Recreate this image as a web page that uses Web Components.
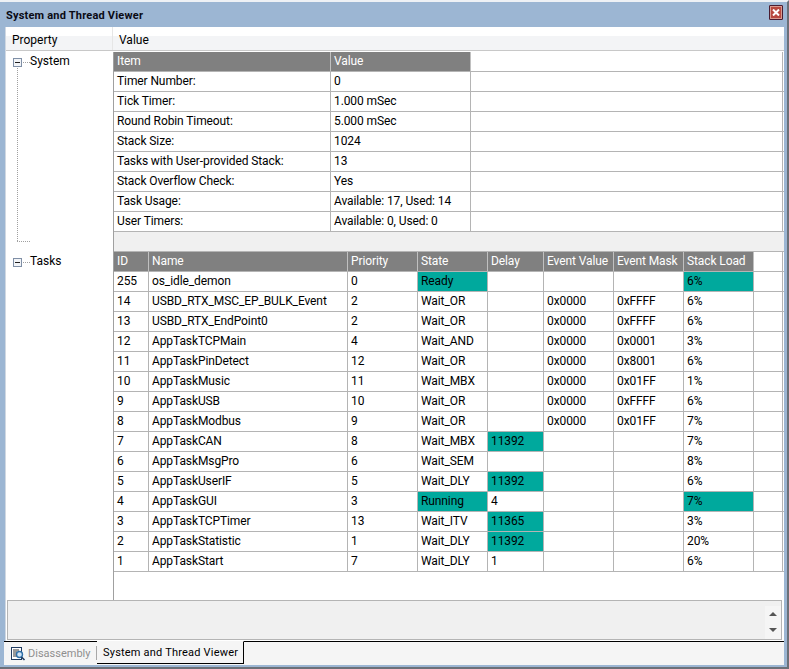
<!DOCTYPE html>
<html>
<head>
<meta charset="utf-8">
<style>
  html, body { margin: 0; padding: 0; height: 100%; overflow: hidden; }
  body { font: 12px Roboto, "Open Sans", sans-serif; color: #000; }
</style>
</head>
<body>
<thread-viewer></thread-viewer>

<script>
// shared look of the grey-lined grids
const GRID_CSS = `
  :host { display: block; letter-spacing: -0.1px; }
  .row { display: flex; height: 20px; box-sizing: border-box; border-bottom: 1px solid #b4b4b4; }
  .cell { box-sizing: border-box; height: 19px; line-height: 19px; padding-left: 3px; border-right: 1px solid #b4b4b4; white-space: nowrap; overflow: hidden; flex: none; }
  .head .cell { background: #808080; color: #fff; border-right-color: #c0c0c0; }
  .head .cell:last-child { background: #fff; border-right-color: #b4b4b4; }
  .hot { background: #00a99d; }
`;

class InfoGrid extends HTMLElement {
  constructor() {
    super();
    this.attachShadow({ mode: "open" });
  }

  // widths: column widths, rows: array of string arrays, first one is the header
  // hot: list of "row:col" cells with the green background
  setData(widths, rows, hot = []) {
    const html = rows.map((r, i) => {
      const cells = r.map((t, c) => {
        const cls = "cell" + (hot.includes(i + ":" + c) ? " hot" : "");
        return `<div class="${cls}" style="width:${widths[c]}px">${t}</div>`;
      }).join("");
      return `<div class="row${i === 0 ? " head" : ""}">${cells}</div>`;
    }).join("");
    this.shadowRoot.innerHTML = `<style>${GRID_CSS}</style>${html}`;
  }
}
customElements.define("info-grid", InfoGrid);

class TreeNode extends HTMLElement {
  constructor() {
    super();
    this.attachShadow({ mode: "open" });
    this.shadowRoot.innerHTML = `
      <style>
        :host { display: flex; align-items: center; height: 20px; position: relative; }
        svg { flex: none; margin-left: 7px; }
        .label { line-height: 18px; height: 20px; }
      </style>
      <svg width="17" height="9" viewBox="0 0 17 9" shape-rendering="crispEdges">
        <rect x="0.5" y="0.5" width="8" height="8" fill="#f2f4f7" stroke="#7f8fa6"/>
        <rect x="2" y="4" width="5" height="1" fill="#202020"/>
        <path d="M10 4.5h1M12 4.5h1M14 4.5h1M16 4.5h1" stroke="#a0a0a0" fill="none"/>
      </svg>
      <span class="label"><slot></slot></span>
    `;
  }
}
customElements.define("tree-node", TreeNode);

class TabBar extends HTMLElement {
  constructor() {
    super();
    this.attachShadow({ mode: "open" });
    this.shadowRoot.innerHTML = `
      <style>
        :host { display: flex; height: 24px; background: #f5f5f5; border-top: 1px solid #000; box-sizing: border-box; margin-left: 4px; font-size: 11px; }
        .off { display: flex; align-items: center; width: 93px; color: #8f8f8f; box-sizing: border-box; padding-left: 6px; position: relative; white-space: nowrap; }
        .off::after { content: ""; position: absolute; right: 0; top: 4px; bottom: 5px; width: 1px; background: #a8a8a8; }
        .off svg { margin-right: 2px; flex: none; }
        .on { margin-top: -1px; height: 23px; border-top: 1px solid #f5f5f5; background: #f5f5f5; border-right: 1px solid #000; border-bottom: 1px solid #000; box-sizing: border-box; width: 147px; padding-left: 6px; line-height: 21px; color: #000; white-space: nowrap; letter-spacing: 0.2px; }
      </style>
      <div class="off">
        <svg width="16" height="16" viewBox="0 0 16 16">
          <rect x="1.5" y="1.5" width="10" height="12" fill="#fff" stroke="#1f3a5f"/>
          <path d="M3 4h6M3 6h4M3 8h4M3 10h5" stroke="#333"/>
          <circle cx="9.5" cy="8.5" r="3" fill="#cfe3f5" stroke="#2f6fa8" stroke-width="1.4"/>
          <path d="M11.5 11l3 3" stroke="#1f3a5f" stroke-width="1.6"/>
        </svg>
        <span>Disassembly</span>
      </div>
      <div class="on">System and Thread Viewer</div>
    `;
  }
}
customElements.define("tab-bar", TabBar);

class ThreadViewer extends HTMLElement {
  constructor() {
    super();
    this.attachShadow({ mode: "open" });
    this.shadowRoot.innerHTML = `
      <style>
        :host { display: flex; flex-direction: column; width: 789px; height: 669px; box-sizing: border-box; background: #9cb6d3; border-top: 2px solid #eef1f5; border-right: 2px solid #6b7078; border-bottom: 2px solid #6b7078; padding: 0 3px 2px 0; }
        .title { height: 25px; box-sizing: border-box; padding: 1px 1px 0 6px; flex: none; display: flex; align-items: center; justify-content: space-between; font-weight: 700; font-size: 11px; letter-spacing: 0.2px; color: #0a0a14; }
        .close { width: 14px; height: 15px; margin-top: -5px; box-sizing: border-box; border: 1px solid #4a1c30; border-radius: 1px; background: #b8483f; box-shadow: inset 0 0 0 1px #d99a90; display: flex; align-items: center; justify-content: center; }
        .body { flex: 1; margin-left: 5px; background: #fff; min-height: 0; display: flex; flex-direction: column; border-left: 1px solid #d0d8e2; }
        .cols { flex: none; height: 24px; margin-bottom: 1px; display: flex; box-sizing: border-box; border-bottom: 1px solid #c8c8c8; background: linear-gradient(#fff 0 9px, #f3f4f6 9px); }
        .cols div { line-height: 26px; padding-left: 6px; box-sizing: border-box; }
        .cols .p { width: 107px; border-right: 1px solid #e6e6e6; }
        .main { flex: 1; display: flex; min-height: 0; }
        .tree { width: 107px; flex: none; position: relative; border-right: 1px solid #a0a0a0; }
        .tree .sys { position: absolute; top: 0; left: 0; right: 0; }
        .tree .tasks { position: absolute; top: 200px; left: 0; right: 0; }
        .guide { position: absolute; left: 11px; top: 14px; height: 175px; border-left: 1px dotted #a0a0a0; }
        .guide2 { position: absolute; left: 11px; top: 189px; width: 13px; border-top: 1px dotted #a0a0a0; }
        .grids { flex: 1; min-width: 0; }
        .gap { height: 20px; box-sizing: border-box; background: #f0f0f0; border-bottom: 1px solid #b4b4b4; }
        .bottom { flex: none; height: 40px; margin: 0 2px 1px 1px; background: #f0f0f0; border: 1px solid #b4b4b4; box-sizing: border-box; position: relative; }
        .arrows { position: absolute; right: 0; top: 5px; bottom: 0; width: 16px; background: #f5f5f5; }
        .arrows i { position: absolute; left: 4px; width: 0; height: 0; border-left: 4px solid transparent; border-right: 4px solid transparent; }
        .arrows .u { top: 6px; border-bottom: 4px solid #555; }
        .arrows .d { bottom: 7px; border-top: 4px solid #555; }
      </style>
      <div class="title"><span>System and Thread Viewer</span>
        <div class="close"><svg width="8" height="7" viewBox="0 0 8 7"><path d="M1 0.5l6 6M7 0.5l-6 6" stroke="#fff" stroke-width="2"/></svg></div>
      </div>
      <div class="body">
        <div class="cols"><div class="p">Property</div><div>Value</div></div>
        <div class="main">
          <div class="tree">
            <div class="guide"></div>
            <div class="guide2"></div>
            <tree-node class="sys">System</tree-node>
            <tree-node class="tasks">Tasks</tree-node>
          </div>
          <div class="grids">
            <info-grid id="system"></info-grid>
            <div class="gap"></div>
            <info-grid id="tasks"></info-grid>
          </div>
        </div>
        <div class="bottom"><div class="arrows"><i class="u"></i><i class="d"></i></div></div>
      </div>
      <tab-bar></tab-bar>
    `;

    const S = [217, 140, 312];
    const sys = [
      ["Item", "Value", ""],
      ["Timer Number:", "0", ""],
      ["Tick Timer:", "1.000 mSec", ""],
      ["Round Robin Timeout:", "5.000 mSec", ""],
      ["Stack Size:", "1024", ""],
      ["Tasks with User-provided Stack:", "13", ""],
      ["Stack Overflow Check:", "Yes", ""],
      ["Task Usage:", "Available: 17, Used: 14", ""],
      ["User Timers:", "Available: 0, Used: 0", ""],
    ];
    const T = [35, 199, 70, 70, 56, 70, 70, 70, 29];
    const tasks = [
      ["ID", "Name", "Priority", "State", "Delay", "Event Value", "Event Mask", "Stack Load", ""],
      ["255", "os_idle_demon", "0", "Ready", "", "", "", "6%", ""],
      ["14", "USBD_RTX_MSC_EP_BULK_Event", "2", "Wait_OR", "", "0x0000", "0xFFFF", "6%", ""],
      ["13", "USBD_RTX_EndPoint0", "2", "Wait_OR", "", "0x0000", "0xFFFF", "6%", ""],
      ["12", "AppTaskTCPMain", "4", "Wait_AND", "", "0x0000", "0x0001", "3%", ""],
      ["11", "AppTaskPinDetect", "12", "Wait_OR", "", "0x0000", "0x8001", "6%", ""],
      ["10", "AppTaskMusic", "11", "Wait_MBX", "", "0x0000", "0x01FF", "1%", ""],
      ["9", "AppTaskUSB", "10", "Wait_OR", "", "0x0000", "0xFFFF", "6%", ""],
      ["8", "AppTaskModbus", "9", "Wait_OR", "", "0x0000", "0x01FF", "7%", ""],
      ["7", "AppTaskCAN", "8", "Wait_MBX", "11392", "", "", "7%", ""],
      ["6", "AppTaskMsgPro", "6", "Wait_SEM", "", "", "", "8%", ""],
      ["5", "AppTaskUserIF", "5", "Wait_DLY", "11392", "", "", "6%", ""],
      ["4", "AppTaskGUI", "3", "Running", "4", "", "", "7%", ""],
      ["3", "AppTaskTCPTimer", "13", "Wait_ITV", "11365", "", "", "3%", ""],
      ["2", "AppTaskStatistic", "1", "Wait_DLY", "11392", "", "", "20%", ""],
      ["1", "AppTaskStart", "7", "Wait_DLY", "1", "", "", "6%", ""],
    ];
    this.shadowRoot.getElementById("system").setData(S, sys);
    this.shadowRoot.getElementById("tasks").setData(T, tasks,
      ["1:3", "1:7", "9:4", "11:4", "12:3", "12:7", "13:4", "14:4"]);
  }
}
customElements.define("thread-viewer", ThreadViewer);
</script>
</body>
</html>
